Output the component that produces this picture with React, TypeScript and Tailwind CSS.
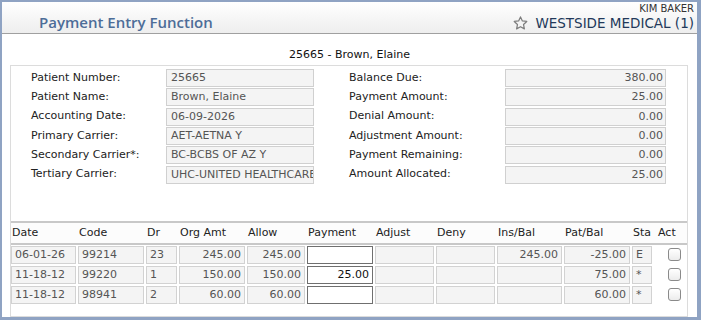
import React from "react";

const Star = () => (
  <svg width="15" height="14" viewBox="0 0 24 23" className="block">
    <path
      d="M12 1.5l3.1 6.6 7.2.9-5.3 5 1.4 7.1L12 17.6l-6.4 3.5L7 14l-5.3-5 7.2-.9z"
      fill="#f3f3f3"
      stroke="#7d7d7d"
      strokeWidth="2"
      strokeLinejoin="round"
    />
  </svg>
);

const leftRows: [string, string][] = [
  ["Patient Number:", "25665"],
  ["Patient Name:", "Brown, Elaine"],
  ["Accounting Date:", "06-09-2026"],
  ["Primary Carrier:", "AET-AETNA Y"],
  ["Secondary Carrier*:", "BC-BCBS OF AZ Y"],
  ["Tertiary Carrier:", "UHC-UNITED HEALTHCARE"],
];

const rightRows: [string, string][] = [
  ["Balance Due:", "380.00"],
  ["Payment Amount:", "25.00"],
  ["Denial Amount:", "0.00"],
  ["Adjustment Amount:", "0.00"],
  ["Payment Remaining:", "0.00"],
  ["Amount Allocated:", "25.00"],
];

const rows = [
  ["06-01-26", "99214", "23", "245.00", "245.00", "", "", "", "245.00", "-25.00", "E"],
  ["11-18-12", "99220", "1", "150.00", "150.00", "25.00", "", "", "", "75.00", "*"],
  ["11-18-12", "98941", "2", "60.00", "60.00", "", "", "", "", "60.00", "*"],
];

const headers = ["Date", "Code", "Dr", "Org Amt", "Allow", "Payment", "Adjust", "Deny", "Ins/Bal", "Pat/Bal", "Sta"];

const widths = [
  "w-[65px]",
  "w-[66px]",
  "w-[31px]",
  "w-[66px]",
  "w-[58px]",
  "w-[66px]",
  "w-[59px]",
  "w-[59px]",
  "w-[65px]",
  "w-[66px]",
  "w-[20px]",
];
const rightAligned = [false, false, false, true, true, true, true, true, true, true, false];

export default function App() {
  return (
    <div className="w-[701px] h-[320px] bg-[#8fa3c3] pt-[2px] pl-[2px] pr-[4px] pb-[3px] font-['DejaVu_Sans',sans-serif] text-[11px] text-[#222]">
      <div className="h-full bg-white flex flex-col">
        <header className="h-[32px] shrink-0 border-b border-[#a0a0a0] bg-gradient-to-b from-white to-[#eeeeee] flex justify-between">
          <div className="pl-[37px] pt-[10px] font-['Open_Sans',sans-serif] font-semibold text-[15px] leading-[20px] text-[#4d6d98]">
            Payment Entry Function
          </div>
          <div className="flex flex-col items-end pr-[3px]">
            <div className="mt-[1px] text-[10px] leading-[12px] text-[#333]">KIM BAKER</div>
            <div className="flex items-center gap-[7px] text-[13.5px] leading-[16px] text-[#22395a]">
              <Star />
              <span>WESTSIDE MEDICAL (1)</span>
            </div>
          </div>
        </header>

        <div className="mt-[14px] text-center leading-[13px] text-[#111]">25665 - Brown, Elaine</div>

        <div className="mt-[4px] ml-[8px] mr-[9px] flex-1 border border-[#dcdcdc] flex flex-col">
          <div className="pt-[3px] pl-[20px] flex gap-[35px]">
            <div className="flex flex-col gap-[1.33px]">
              {leftRows.map(([l, v]) => (
                <div key={l} className="flex items-center h-[18px]">
                  <div className="w-[135px]">{l}</div>
                  <div className="w-[148px] h-[18px] border border-[#d0d0d0] bg-[#f4f4f4] pl-[4px] text-[11px] leading-[16px] text-[#555] whitespace-nowrap overflow-hidden">
                    {v}
                  </div>
                </div>
              ))}
            </div>
            <div className="flex flex-col gap-[1.33px]">
              {rightRows.map(([l, v]) => (
                <div key={l} className="flex items-center h-[18px]">
                  <div className="w-[156px]">{l}</div>
                  <div className="w-[161px] h-[18px] border border-[#d0d0d0] bg-[#f4f4f4] pr-[2px] text-right text-[11px] leading-[16px] text-[#555]">
                    {v}
                  </div>
                </div>
              ))}
            </div>
          </div>

          <div className="mt-[37px] h-[24px] border-t-2 border-b-2 border-[#c8c8c8] bg-[#fcfcfc] flex gap-[2px] items-center">
            {headers.map((h, i) => (
              <div key={h} className={`${widths[i]} pl-[1px] leading-[20px] whitespace-nowrap`}>
                {h}
              </div>
            ))}
            <div className="pl-[4px] leading-[20px]">Act</div>
          </div>

          <div className="mt-[1px] flex flex-col gap-[2px]">
            {rows.map((r, ri) => (
              <div key={ri} className="flex gap-[2px] h-[18px]">
                {r.map((c, ci) =>
                  ci === 5 ? (
                    <div
                      key={ci}
                      className={`${widths[ci]} h-[18px] border border-[#6f6f6f] bg-white pr-[3px] text-right leading-[16px] text-[#111]`}
                    >
                      {c}
                    </div>
                  ) : (
                    <div
                      key={ci}
                      className={`${widths[ci]} h-[18px] border border-[#d2d2d2] bg-[#f4f4f4] leading-[16px] text-[#555] ${
                        rightAligned[ci] ? "text-right pr-[3px]" : "pl-[3px]"
                      }`}
                    >
                      {c}
                    </div>
                  )
                )}
                <div className="flex items-center pl-[14px]">
                  <div className="w-[13px] h-[13px] rounded-[3px] border border-[#8a8a8a] bg-gradient-to-b from-white to-[#ececec]" />
                </div>
              </div>
            ))}
          </div>
        </div>
      </div>
    </div>
  );
}
